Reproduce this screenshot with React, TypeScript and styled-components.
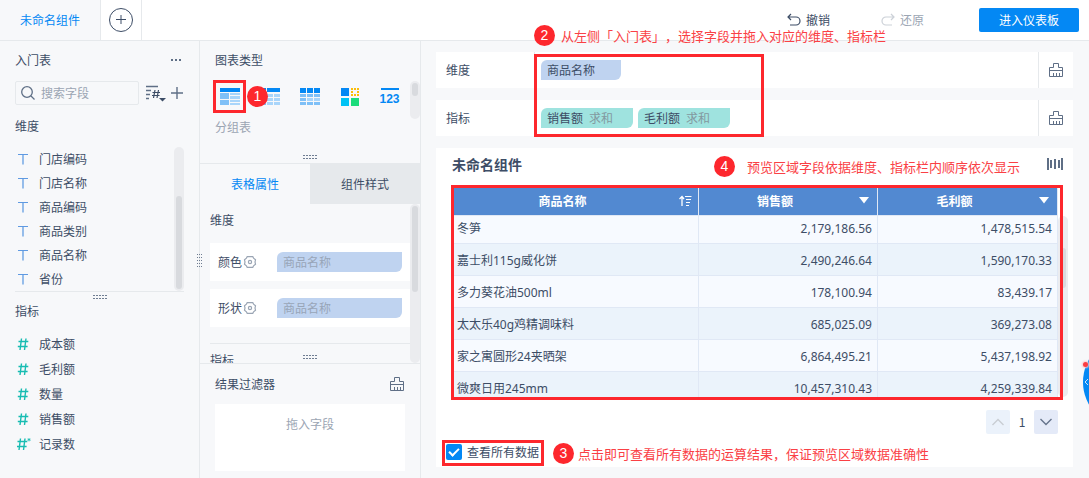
import React from "react";
import styled, { createGlobalStyle, css } from "styled-components";

const c = {
  text: "#3d4d66",
  muted: "#9ba5b3",
  icon: "#5f6f86",
  line: "#e6e9ec",
  panel: "#f7f8fa",
  blue: "#0488f4",
  red: "#fd272d",
  redText: "#fa4045",
  dimension: "#bfd3f0",
  measure: "#9fe3df",
};

const GlobalStyle = createGlobalStyle`
  * { box-sizing: border-box; }
  body {
    margin: 0;
    background: ${c.panel};
    color: ${c.text};
    font: 12px/24px "Noto Sans CJK SC", sans-serif;
    text-spacing-trim: space-all;
    overflow-x: hidden;
  }
  button, input { font: inherit; color: inherit; }
  button { margin: 0; padding: 0; border: 0; background: none; cursor: pointer; }
  ul { margin: 0; padding: 0; list-style: none; }
  h2, h3 { margin: 0; font: inherit; }
  svg { display: block; flex: none; }
`;

const Page = styled.div`
  display: flex;
  flex-direction: column;
  min-height: 100vh;
`;

const TopBar = styled.header`
  display: flex;
  height: 41px;
  border-bottom: 1px solid ${c.line};
  background: #fff;
`;

const SheetTab = styled.button`
  width: 101px;
  border-right: 1px solid ${c.line};
  background: ${c.panel};
  color: ${c.blue};
`;

const AddTab = styled.button`
  display: flex;
  align-items: center;
  justify-content: center;
  width: 41px;
  border-right: 1px solid ${c.line};
`;

const TopActions = styled.div`
  display: flex;
  align-items: center;
  margin-left: auto;
  padding-right: 10px;
`;

const HistoryButton = styled.button<{ $off?: boolean }>`
  display: flex;
  align-items: center;
  gap: 5px;
  margin-right: ${(p) => (p.$off ? 55 : 51)}px;
  color: ${(p) => (p.$off ? c.muted : c.text)};
  svg { opacity: ${(p) => (p.$off ? 0.5 : 1)}; }
`;

const PrimaryButton = styled.button`
  width: 100px;
  height: 24px;
  border-radius: 2px;
  background: ${c.blue};
  color: #fff;
`;

const Workspace = styled.div`
  display: flex;
  flex: 1;
`;

const FieldPanel = styled.aside`
  position: relative;
  flex: none;
  width: 200px;
  padding: 7px 15px 0;
  border-right: 1px solid ${c.line};
`;

const PanelHead = styled.div`
  display: flex;
  align-items: center;
  justify-content: space-between;
`;

const SearchRow = styled.div`
  display: flex;
  align-items: center;
  margin-top: 9px;
`;

const SearchBox = styled.label`
  display: flex;
  align-items: center;
  gap: 6px;
  flex: 1;
  min-width: 0;
  height: 24px;
  margin-right: 7px;
  padding-left: 5px;
  border: 1px solid ${c.line};
  border-radius: 2px;
  input {
    width: 100%;
    min-width: 0;
    height: 22px;
    padding: 0;
    border: 0;
    outline: 0;
    background: none;
  }
  input::placeholder { color: ${c.muted}; opacity: 1; }
`;

const IconButton = styled.button`
  display: flex;
  align-items: center;
  justify-content: center;
`;

const GroupTitle = styled.h3<{ $top: number }>`
  margin-top: ${(p) => p.$top}px;
`;

const DimensionArea = styled.div`
  position: relative;
  margin-top: 9px;
  border-bottom: 1px solid ${c.line};
`;

const FieldList = styled.ul<{ $top?: number; $row: number }>`
  margin-top: ${(p) => p.$top ?? 0}px;
  li {
    display: flex;
    align-items: center;
    gap: 8px;
    height: ${(p) => p.$row}px;
    padding-left: 2px;
  }
`;

const Track = styled.div<{ $top: number; $bottom: number; $right?: number }>`
  position: absolute;
  top: ${(p) => p.$top}px;
  right: ${(p) => p.$right ?? 0}px;
  bottom: ${(p) => p.$bottom}px;
  width: 10px;
  padding: 2px;
  border-radius: 5px;
  background: #ebecef;
`;

const Thumb = styled.div<{ $offset?: number; $size: number }>`
  height: ${(p) => p.$size}px;
  margin-top: ${(p) => p.$offset ?? 0}px;
  border-radius: 3px;
  background: #d8dade;
`;

const Grip = styled.div<{ $place: "below" | "bottom" | "side" }>`
  position: absolute;
  ${(p) =>
    p.$place === "side"
      ? css`right: -3px; top: 213px;`
      : p.$place === "below"
        ? css`left: 50%; bottom: -8px; margin-left: -7px;`
        : css`left: 50%; bottom: 4px; margin-left: -7px;`}
`;

const ConfigPanel = styled.aside`
  flex: none;
  width: 221px;
  border-right: 1px solid ${c.line};
`;

const ChartTypes = styled.section`
  position: relative;
  height: 123px;
  padding: 7px 0 0 15px;
  border-bottom: 1px solid ${c.line};
`;

const ChartRow = styled.div`
  display: flex;
  gap: 7px;
  margin: 8px 0 2px -2px;
`;

const ChartButton = styled.button`
  position: relative;
  display: flex;
  align-items: center;
  justify-content: center;
  width: 33px;
  height: 33px;
`;

const MutedText = styled.div`
  color: ${c.muted};
`;

const Tabs = styled.div`
  display: flex;
  height: 40px;
`;

const Tab = styled.button<{ $active?: boolean }>`
  flex: 1;
  background: ${(p) => (p.$active ? c.panel : c.line)};
  color: ${(p) => (p.$active ? c.blue : c.text)};
`;

const Attributes = styled.section`
  position: relative;
  height: 160px;
  padding: 4px 10px 0;
  border-bottom: 1px solid ${c.line};
  overflow: hidden;
`;

const AttributeList = styled.div`
  display: flex;
  flex-direction: column;
  gap: 8px;
  margin-top: 11px;
  padding-bottom: 16px;
  border-bottom: 1px solid ${c.line};
`;

const AttributeCard = styled.div`
  display: flex;
  align-items: center;
  height: 38px;
  padding: 0 8px;
  background: #fff;
  svg { margin-left: 1px; }
`;

const Chip = styled.div<{ $kind: "dimension" | "measure"; $faded?: boolean }>`
  display: flex;
  align-items: center;
  gap: 6px;
  width: ${(p) => (p.$faded ? 125 : p.$kind === "dimension" ? 80 : 92)}px;
  height: 20px;
  margin-left: ${(p) => (p.$faded ? "auto" : 0)};
  padding-left: 6px;
  border-radius: 6px 0 6px 0;
  background: ${(p) => c[p.$kind]};
  color: ${(p) => (p.$faded ? "#98a5b8" : c.text)};
  line-height: 20px;
  small { font-size: 12px; color: #83999f; }
`;

const Filters = styled.section`
  padding: 8px 15px 0;
`;

const DropArea = styled.div`
  height: 67px;
  margin-top: 8px;
  padding-top: 8px;
  background: #fff;
  color: ${c.muted};
  text-align: center;
`;

const Main = styled.main`
  flex: 1;
  min-width: 0;
  padding: 11px 16px 11px 15px;
`;

const Shelves = styled.section`
  position: relative;
  display: flex;
  flex-direction: column;
  gap: 12px;
`;

const Shelf = styled.div`
  display: flex;
  height: 36px;
  background: #fff;
`;

const ShelfLabel = styled.div`
  width: 99px;
  padding-left: 10px;
  border-right: 1px solid ${c.line};
  line-height: 36px;
`;

const ShelfFields = styled.div`
  display: flex;
  flex: 1;
  align-items: center;
  gap: 5px;
  padding-left: 6px;
`;

const ShelfClear = styled(IconButton)`
  width: 35px;
  border-left: 1px solid ${c.line};
`;

const Preview = styled.section`
  position: relative;
  margin-top: 12px;
  padding: 4px 10px 7px;
  background: #fff;
`;

const PreviewHead = styled.div`
  display: flex;
  align-items: center;
  justify-content: space-between;
  padding-left: 6px;
  h2 { font-size: 14px; font-weight: 700; }
`;

const TableBox = styled.div`
  position: relative;
  height: 215px;
  margin: 9px 0 0 5px;
  padding: 2px 5px 3px 2px;
`;

const TableClip = styled.div`
  height: 100%;
  overflow: hidden;
`;

const DataTable = styled.table`
  width: 100%;
  border-collapse: separate;
  border-spacing: 0;
  table-layout: fixed;
  th, td {
    padding: 0 5px;
    border-right: 1px solid #e0e8f5;
    border-bottom: 1px solid #e0e8f5;
    white-space: nowrap;
  }
  th {
    position: relative;
    height: 29px;
    padding-right: 31px;
    background: #5289d1;
    color: #fff;
    font-weight: 700;
    text-align: center;
  }
  th svg { position: absolute; top: 8px; right: 6px; }
  td {
    height: 32px;
    padding-top: 2px;
    font-family: "Noto Sans", "Noto Sans CJK SC", sans-serif;
    text-align: right;
  }
  td:first-child { padding-left: 4px; text-align: left; }
  tbody tr:nth-child(odd) { background: #f7faff; }
  tbody tr:nth-child(even) { background: #ebf3fb; }
  tbody tr:first-child td { height: 28px; padding-top: 0; padding-bottom: 2px; }
`;

const ValueCol = styled.col<{ $width: number }>`
  width: ${(p) => p.$width}px;
`;

const Pager = styled.nav`
  display: flex;
  justify-content: flex-end;
  margin-top: 10px;
  padding-right: 5px;
  span { width: 24px; text-align: center; }
`;

const PageButton = styled(IconButton)<{ $off?: boolean }>`
  width: 24px;
  height: 24px;
  border-radius: 2px;
  background: ${(p) => (p.$off ? "#ebf2fb" : "#e4eaf8")};
  color: ${(p) => (p.$off ? "#c9cdd3" : "#66748c")};
`;

const AllData = styled.label`
  position: relative;
  display: inline-flex;
  align-items: center;
  gap: 5px;
  height: 16px;
  margin-top: 10px;
  vertical-align: top;
  line-height: 16px;
  input {
    position: relative;
    appearance: none;
    width: 16px;
    height: 16px;
    margin: 0;
    border-radius: 2px;
    background: ${c.blue};
  }
  input:checked::after {
    content: "";
    position: absolute;
    left: 5px;
    top: 2px;
    width: 4px;
    height: 8px;
    border: solid #fff;
    border-width: 0 2px 2px 0;
    transform: rotate(45deg);
  }
`;

const Frame = styled.div<{ $inset: string }>`
  position: absolute;
  inset: ${(p) => p.$inset};
  border: 3px solid ${c.red};
  pointer-events: none;
`;

const ShelfFrame = styled(Frame)`
  width: 230px;
`;

const NoteBox = styled.div<{ $left: number; $top: number; $gap: number }>`
  position: absolute;
  z-index: 2;
  left: ${(p) => p.$left}px;
  top: ${(p) => p.$top}px;
  display: flex;
  align-items: center;
  gap: ${(p) => p.$gap}px;
  color: ${c.redText};
  font-size: 13px;
  line-height: 18px;
  white-space: nowrap;
  pointer-events: none;
  b {
    width: 21px;
    height: 21px;
    border-radius: 50%;
    background: ${c.red};
    color: #fff;
    font: 14px/21px "Liberation Sans", sans-serif;
    text-align: center;
  }
`;

const Assistant = styled.button`
  position: fixed;
  top: 336px;
  right: -86px;
  width: 92px;
  height: 92px;
  border-radius: 50%;
  background: ${c.blue};
  svg { position: absolute; left: 1px; top: 42px; }
  &::before {
    content: "";
    position: absolute;
    left: 0;
    top: 26px;
    width: 5px;
    height: 5px;
    border-radius: 50%;
    background: #fb3d43;
    box-shadow: 0 0 2px 1px #fdc9cc;
  }
`;

const NumberIcon = styled.span`
  display: flex;
  justify-content: center;
  width: 18px;
  height: 17px;
  border-top: 2px solid ${c.blue};
  color: ${c.blue};
  font: 700 12px/18px "Liberation Sans", sans-serif;
`;

function Note(p: { n: number; left: number; top: number; gap?: number; children?: React.ReactNode }) {
  return (
    <NoteBox $left={p.left} $top={p.top} $gap={p.gap ?? 0}>
      <b>{p.n}</b>
      {p.children && <span>{p.children}</span>}
    </NoteBox>
  );
}

function GripDots({ vertical }: { vertical?: boolean }) {
  const dots = [];
  const cols = vertical ? 3 : 5;
  const rows = vertical ? 5 : 2;
  for (let x = 0; x < cols; x++)
    for (let y = 0; y < rows; y++)
      dots.push(
        <rect key={`${x}-${y}`} x={vertical ? x * 2 : x * 3} y={y * 3} width={vertical ? 1 : 2} height="1" />
      );
  return (
    <svg width={vertical ? 5 : 14} height={vertical ? 13 : 4} fill="#6f7d92" aria-hidden>
      {dots}
    </svg>
  );
}

const BrushIcon = () => (
  <svg width="16" height="16" viewBox="0 0 16 16" fill="none" stroke={c.icon} aria-hidden>
    <path d="M5.5 5.5V1.5h5v4h4v9h-13v-9h4M1.5 8.500h13M5.500 14v-3M8.500 14v-3M11.500 14v-3" />
  </svg>
);

const TextIcon = () => (
  <svg width="14" height="12" viewBox="0 0 14 12" fill="none" stroke="#5f9ae2" aria-hidden>
    <path d="M1 1.500h10" />
    <path d="M6 1.500v10" strokeWidth="1.6" opacity="0.8" />
  </svg>
);

const HashIcon = ({ star }: { star?: boolean }) => (
  <svg width="14" height="14" viewBox="0 0 14 14" fill="none" stroke="#17bcb2" strokeWidth="1.4" aria-hidden>
    <g transform={star ? "translate(-1 0)" : undefined}>
      <path d="M4.500 1.500L3 13M9 1.500L7.500 13M1.500 4.500h9.800M.8 9.500h9.800" />
    </g>
    {star && <path d="M12 1v3.400M10.500 2l3 1.400M13.500 2l-3 1.400" strokeWidth="0.8" />}
  </svg>
);

const GearIcon = () => (
  <svg width="14" height="14" viewBox="0 0 14 14" fill="none" stroke="#9aa5b4" strokeWidth="1.2" aria-hidden>
    <path d="M4.200 1.700h5.600l.8 1.500 1.900 1.600-.5 2.200.5 2.200-1.900 1.600-.8 1.500H4.200l-.8-1.500-1.900-1.600.5-2.200-.5-2.200 1.900-1.600z" />
    <circle cx="7" cy="7" r="1.600" />
  </svg>
);

const GroupTableIcon = () => (
  <svg width="20" height="17" aria-hidden>
    <path fill="#0488f4" d="M0 0h20v4H0z" />
    <path fill="#7fc0f7" d="M0 5h9v6H0zM0 12h9v5H0z" />
    <path fill="#a9d5fa" d="M10 5h10v2H10zM10 8h10v3H10zM10 12h10v2H10zM10 15h10v2H10z" />
  </svg>
);

const GridIcon = ({ cross }: { cross?: boolean }) => (
  <svg width="20" height="17" aria-hidden>
    <path fill="#0488f4" d={cross ? "M0 0h6v4H0zM7 0h13v4H7z" : "M0 0h6v5H0zM7 0h6v5H7zM14 0h6v5H14z"} />
    <path fill={cross ? "#a9d5fa" : "#7fc0f7"} d="M7 6h6v3H7zM14 6h6v3H14zM7 14h6v3H7zM14 14h6v3H14z" />
    <path fill="#a9d5fa" d="M7 10h6v3H7zM14 10h6v3H14z" />
    <path fill="#7fc0f7" d="M0 6h6v3H0zM0 10h6v3H0zM0 14h6v3H0z" />
  </svg>
);

const ColorTableIcon = () => (
  <svg width="18" height="18" aria-hidden>
    <path fill="#0488f4" d="M0 0h8v8H0z" />
    <path fill="none" stroke="#fbbd0a" strokeWidth="2" strokeDasharray="2 1" d="M10 1h8M10 7h8M11 0v8M17 0v8" />
    <path fill="#00c3f5" d="M0 10h8v8H0z" />
    <path fill="#1bdc7b" d="M10 10h8v8h-8z" />
  </svg>
);

const Chevron = ({ up }: { up?: boolean }) => (
  <svg width="12" height="8" viewBox="0 0 12 8" fill="none" stroke="currentColor" strokeWidth="1.4" aria-hidden>
    <path d={up ? "M.5 7L6 1.500 11.500 7" : "M.5 1L6 6.500 11.500 1"} />
  </svg>
);

const FilterArrow = () => (
  <svg width="14" height="12" aria-hidden>
    <path d="M2 2h10L7 8.500z" fill="#fff" />
  </svg>
);

const SortIcon = () => (
  <svg width="14" height="12" viewBox="0 0 14 12" fill="none" stroke="#fff" aria-hidden>
    <path d="M4 11V1.500M1.500 4L4 1.500 6 4" strokeWidth="1.300" />
    <path d="M7 1.500h6.500M8 4.500h5M8 7.500h4M8 10.500h3" />
  </svg>
);

const dimensions = ["门店编码", "门店名称", "商品编码", "商品类别", "商品名称", "省份"];
const measures = ["成本额", "毛利额", "数量", "销售额", "记录数"];
const rows = [
  ["冬笋", "2,179,186.56", "1,478,515.54"],
  ["嘉士利115g威化饼", "2,490,246.64", "1,590,170.33"],
  ["多力葵花油500ml", "178,100.94", "83,439.17"],
  ["太太乐40g鸡精调味料", "685,025.09", "369,273.08"],
  ["家之寓圆形24夹晒架", "6,864,495.21", "5,437,198.92"],
  ["微爽日用245mm", "10,457,310.43", "4,259,339.84"],
];

export default function App() {
  return (
    <Page lang="zh-CN">
      <GlobalStyle />
      <TopBar>
        <SheetTab>未命名组件</SheetTab>
        <AddTab aria-label="添加组件">
          <svg width="24" height="24" viewBox="0 0 24 24" fill="none" stroke={c.text} aria-hidden>
            <circle cx="12" cy="12" r="11.500" />
            <path d="M7 11.500h10M12 7v9" />
          </svg>
        </AddTab>
        <TopActions>
          <HistoryButton>
            <svg width="14" height="14" viewBox="0 0 14 14" fill="none" stroke="currentColor" strokeWidth="1.200" aria-hidden>
              <path d="M4 1L1 4l3 3M1 4h8a3.500 3.500 0 010 8H3" />
            </svg>
            撤销
          </HistoryButton>
          <HistoryButton $off>
            <svg width="14" height="14" viewBox="0 0 14 14" fill="none" stroke="currentColor" strokeWidth="1.200" aria-hidden>
              <path d="M10 1l3 3-3 3M13 4H5a3.500 3.500 0 000 8h6" />
            </svg>
            还原
          </HistoryButton>
          <PrimaryButton>进入仪表板</PrimaryButton>
        </TopActions>
      </TopBar>

      <Workspace>
        <FieldPanel>
          <PanelHead>
            <h2>入门表</h2>
            <IconButton aria-label="更多">
              <svg width="14" height="4" fill={c.icon} aria-hidden>
                <path d="M1 1h2v2H1zM5 1h2v2H5zM9 1h2v2H9z" />
              </svg>
            </IconButton>
          </PanelHead>
          <SearchRow>
            <SearchBox>
              <svg width="14" height="14" viewBox="0 0 14 14" fill="none" stroke={c.icon} strokeWidth="1.300" aria-hidden>
                <circle cx="6" cy="6" r="5.300" />
                <path d="M10 10l3.500 3.500" />
              </svg>
              <input placeholder="搜索字段" aria-label="搜索字段" />
            </SearchBox>
            <IconButton aria-label="排序">
              <svg width="20" height="18" viewBox="0 0 20 18" fill="none" stroke={c.icon} aria-hidden>
                <path d="M0 2.500h12M0 6.500h5M0 10.500h4M0 14.500h3" strokeWidth="1.400" />
                <path d="M9 6L7.500 14M12.500 6L11 14M6.500 8.500h7.500M6 11.500h7.500" stroke={c.text} strokeWidth="1.200" />
                <path d="M13 14h7l-3.500 3.500z" fill={c.text} stroke="none" />
              </svg>
            </IconButton>
            <IconButton aria-label="添加字段">
              <svg width="18" height="14" viewBox="0 0 18 14" fill="none" stroke={c.icon} strokeWidth="1.400" aria-hidden>
                <path d="M5 7h12M11 1v12" />
              </svg>
            </IconButton>
          </SearchRow>
          <GroupTitle $top={9}>维度</GroupTitle>
          <DimensionArea>
            <FieldList $row={24}>
              {dimensions.map((name) => (
                <li key={name}>
                  <TextIcon />
                  {name}
                </li>
              ))}
            </FieldList>
            <Track $top={0} $bottom={0}>
              <Thumb $offset={47} $size={93} />
            </Track>
            <Grip $place="below">
              <GripDots />
            </Grip>
          </DimensionArea>
          <GroupTitle $top={7}>指标</GroupTitle>
          <FieldList $row={25} $top={8}>
            {measures.map((name) => (
              <li key={name}>
                <HashIcon star={name === "记录数"} />
                {name}
              </li>
            ))}
          </FieldList>
          <Grip $place="side">
            <GripDots vertical />
          </Grip>
        </FieldPanel>

        <ConfigPanel>
          <ChartTypes>
            <h2>图表类型</h2>
            <ChartRow>
              <ChartButton aria-label="分组表">
                <GroupTableIcon />
                <Frame $inset="0" />
                <Note n={1} left={34} top={6} />
              </ChartButton>
              <ChartButton aria-label="交叉表">
                <GridIcon cross />
              </ChartButton>
              <ChartButton aria-label="明细表">
                <GridIcon />
              </ChartButton>
              <ChartButton aria-label="颜色表格">
                <ColorTableIcon />
              </ChartButton>
              <ChartButton aria-label="KPI指标卡">
                <NumberIcon>123</NumberIcon>
              </ChartButton>
            </ChartRow>
            <MutedText>分组表</MutedText>
            <Track $top={40} $bottom={44}>
              <Thumb $size={13} />
            </Track>
            <Grip $place="bottom">
              <GripDots />
            </Grip>
          </ChartTypes>
          <Tabs>
            <Tab $active>表格属性</Tab>
            <Tab>组件样式</Tab>
          </Tabs>
          <Attributes>
            <h3>维度</h3>
            <AttributeList>
              {["颜色", "形状"].map((name) => (
                <AttributeCard key={name}>
                  {name}
                  <GearIcon />
                  <Chip $kind="dimension" $faded>
                    商品名称
                  </Chip>
                </AttributeCard>
              ))}
            </AttributeList>
            <GroupTitle $top={4}>指标</GroupTitle>
            <Track $top={0} $bottom={0}>
              <Thumb $size={86} />
            </Track>
            <Grip $place="bottom">
              <GripDots />
            </Grip>
          </Attributes>
          <Filters>
            <PanelHead>
              <h3>结果过滤器</h3>
              <IconButton aria-label="清空过滤器">
                <BrushIcon />
              </IconButton>
            </PanelHead>
            <DropArea>拖入字段</DropArea>
          </Filters>
        </ConfigPanel>

        <Main>
          <Shelves>
            <Shelf>
              <ShelfLabel>维度</ShelfLabel>
              <ShelfFields>
                <Chip $kind="dimension">商品名称</Chip>
              </ShelfFields>
              <ShelfClear aria-label="清空维度">
                <BrushIcon />
              </ShelfClear>
            </Shelf>
            <Shelf>
              <ShelfLabel>指标</ShelfLabel>
              <ShelfFields>
                <Chip $kind="measure">
                  销售额 <small>求和</small>
                </Chip>
                <Chip $kind="measure">
                  毛利额 <small>求和</small>
                </Chip>
              </ShelfFields>
              <ShelfClear aria-label="清空指标">
                <BrushIcon />
              </ShelfClear>
            </Shelf>
            <ShelfFrame $inset="2px auto -1px 98px" />
            <Note n={2} left={98} top={-27} gap={6}>
              从左侧「入门表」，选择字段并拖入对应的维度、指标栏
            </Note>
          </Shelves>

          <Preview>
            <PreviewHead>
              <h2>未命名组件</h2>
              <IconButton aria-label="列宽">
                <svg width="16" height="12" fill={c.icon} aria-hidden>
                  <path d="M0 0h2v12H0zM3 2h2v8H3zM7 1h2v10H7zM11 2h2v8h-2zM14 0h2v12h-2z" />
                </svg>
              </IconButton>
            </PreviewHead>
            <TableBox>
              <Track $top={31} $bottom={3} $right={-5}>
                <Thumb $offset={30} $size={40} />
              </Track>
              <TableClip>
                <DataTable>
                  <colgroup>
                    <col />
                    <ValueCol $width={179} />
                    <ValueCol $width={180} />
                  </colgroup>
                  <thead>
                    <tr>
                      <th scope="col">
                        商品名称
                        <SortIcon />
                      </th>
                      <th scope="col">
                        销售额
                        <FilterArrow />
                      </th>
                      <th scope="col">
                        毛利额
                        <FilterArrow />
                      </th>
                    </tr>
                  </thead>
                  <tbody>
                    {rows.map((row) => (
                      <tr key={row[0]}>
                        {row.map((cell) => (
                          <td key={cell}>{cell}</td>
                        ))}
                      </tr>
                    ))}
                  </tbody>
                </DataTable>
              </TableClip>
              <Frame $inset="0" />
            </TableBox>
            <Pager aria-label="分页">
              <PageButton $off aria-label="上一页">
                <Chevron up />
              </PageButton>
              <span>1</span>
              <PageButton aria-label="下一页">
                <Chevron />
              </PageButton>
            </Pager>
            <AllData>
              <input type="checkbox" defaultChecked />
              查看所有数据
              <Frame $inset="-4px -5px -6px -4px" />
            </AllData>
            <Note n={4} left={278} top={8} gap={12}>
              预览区域字段依据维度、指标栏内顺序依次显示
            </Note>
            <Note n={3} left={117} top={295} gap={4}>
              点击即可查看所有数据的运算结果，保证预览区域数据准确性
            </Note>
          </Preview>
        </Main>
      </Workspace>

      <Assistant aria-label="展开助手">
        <svg width="5" height="8" viewBox="0 0 5 8" fill="none" stroke="#cfe6fd" aria-hidden>
          <path d="M4 1L1 4l3 3" />
        </svg>
      </Assistant>
    </Page>
  );
}
